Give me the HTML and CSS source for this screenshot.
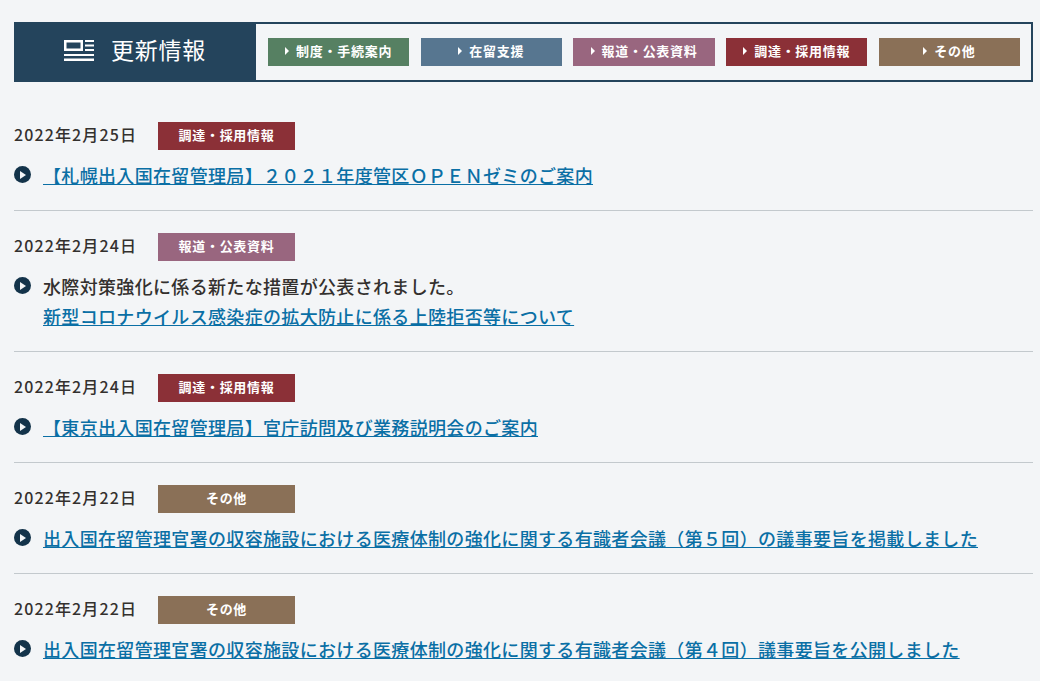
FILE: index.html
```html
<!DOCTYPE html>
<html lang="ja">
<head>
<meta charset="utf-8">
<title>更新情報</title>
<link rel="stylesheet" href="styles.css">
</head>
<body>
<div class="page">
  <header class="head">
    <h2 class="title">
      <svg class="title-icon" width="30" height="21" viewBox="0 0 30 21" aria-hidden="true">
        <path fill="#fff" fill-rule="evenodd" d="M0 0h19v11H0zM2.500 2.500v6h14v-6zM21 0h9v2h-9zM21 4.500h9v2h-9zM21 9h9v2h-9zM0 14h30v2H0zM0 18.500h30V21H0z"/>
      </svg>
      <span>更新情報</span>
    </h2>
    <nav class="tabs">
      <a class="tab green">制度・手続案内</a>
      <a class="tab blue">在留支援</a>
      <a class="tab purple">報道・公表資料</a>
      <a class="tab red">調達・採用情報</a>
      <a class="tab brown">その他</a>
    </nav>
  </header>
  <ul class="news">
    <li class="item">
      <div class="meta"><time class="date">2022年2月25日</time><span class="badge red">調達・採用情報</span></div>
      <div class="body"><i class="bullet"></i><p class="text"><a href="#">【札幌出入国在留管理局】２０２１年度管区ＯＰＥＮゼミのご案内</a></p></div>
    </li>
    <li class="item">
      <div class="meta"><time class="date">2022年2月24日</time><span class="badge purple">報道・公表資料</span></div>
      <div class="body"><i class="bullet"></i><p class="text">水際対策強化に係る新たな措置が公表されました。<br><a href="#">新型コロナウイルス感染症の拡大防止に係る上陸拒否等について</a></p></div>
    </li>
    <li class="item">
      <div class="meta"><time class="date">2022年2月24日</time><span class="badge red">調達・採用情報</span></div>
      <div class="body"><i class="bullet"></i><p class="text"><a href="#">【東京出入国在留管理局】官庁訪問及び業務説明会のご案内</a></p></div>
    </li>
    <li class="item">
      <div class="meta"><time class="date">2022年2月22日</time><span class="badge brown">その他</span></div>
      <div class="body"><i class="bullet"></i><p class="text"><a href="#">出入国在留管理官署の収容施設における医療体制の強化に関する有識者会議（第５回）の議事要旨を掲載しました</a></p></div>
    </li>
    <li class="item">
      <div class="meta"><time class="date">2022年2月22日</time><span class="badge brown">その他</span></div>
      <div class="body"><i class="bullet"></i><p class="text"><a href="#">出入国在留管理官署の収容施設における医療体制の強化に関する有識者会議（第４回）議事要旨を公開しました</a></p></div>
    </li>
  </ul>
</div>
</body>
</html>
```
FILE: styles.css
```css
* { box-sizing: border-box; }
html, body { margin: 0; padding: 0; }
body {
  background: #f3f5f7;
  color: #33302e;
  font-family: "Noto Sans CJK JP", "Noto Sans", sans-serif;
  height: 681px;
  overflow: hidden;
}
.page { padding: 22px 7px 0 14px; }
.head { display: flex; height: 60px; border: 2px solid #24445c; }
.title {
  width: 240px; margin: 0; padding-right: 2px; background: #24445c; color: #fff;
  display: flex; align-items: center; justify-content: center; gap: 17px;
  font-size: 23px; font-weight: 400; line-height: 1; letter-spacing: .03em;
}
.title span { position: relative; top: -3px; }
.title-icon { position: relative; top: -1.500px; }
.tabs { flex: 1; display: flex; gap: 11.500px; padding: 14px 11px 14px 12px; }
.tab {
  flex: 1; height: 28px; color: #fff; font-size: 13px; font-weight: 700;
  letter-spacing: .055em; line-height: 24px; padding-bottom: 2px;
  display: flex; align-items: center; justify-content: center; gap: 7px;
}
.tab::before {
  content: ""; border-left: 4px solid #fff;
  border-top: 4px solid transparent; border-bottom: 4px solid transparent;
}
.green { background: #568062; }
.blue { background: #577690; }
.purple { background: #99667f; }
.red { background: #8b3037; }
.brown { background: #8a7057; }
.news { list-style: none; margin: 0; padding: 0; }
.item { padding: 40px 0 19px; border-bottom: 1px solid #c3c9cd; }
.item + .item { padding-top: 22px; }
.meta { display: flex; align-items: center; height: 28px; }
.date { width: 144px; font-size: 16px; font-weight: 500; letter-spacing: .07em; line-height: 24px; padding-bottom: 5px; }
.badge {
  width: 137px; height: 28px; color: #fff; font-size: 13px; font-weight: 700;
  letter-spacing: .055em; line-height: 24px; padding-bottom: 2px;
  display: flex; align-items: center; justify-content: center;
}
.body { display: flex; margin-top: 11px; }
.bullet {
  width: 17px; height: 17px; margin: 5px 12px 0 0; flex: none;
  border-radius: 50%; background: #13334a; position: relative;
}
.bullet::after {
  content: ""; position: absolute; left: 6px; top: 4.500px;
  border-left: 6px solid #f3f5f7;
  border-top: 4px solid transparent; border-bottom: 4px solid transparent;
}
.text { margin: 0; font-size: 18px; line-height: 30px; font-weight: 500; letter-spacing: .0185em; position: relative; top: -1px; }
.text a { color: #0a6fa5; text-decoration: underline; }
```
